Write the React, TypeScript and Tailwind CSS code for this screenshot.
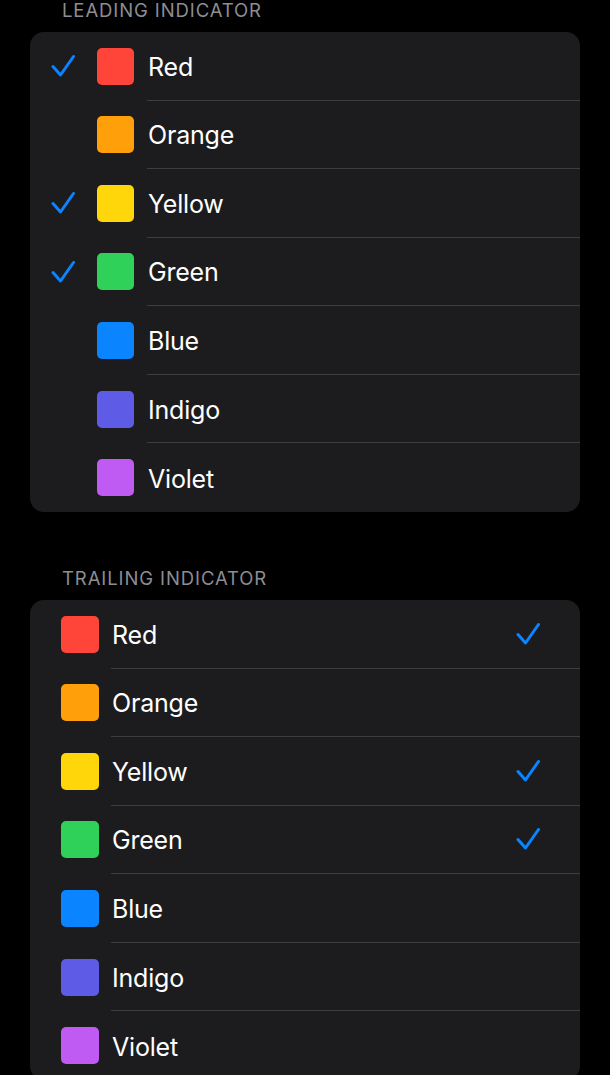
import React from "react";

type Item = { name: string; color: string; checked: boolean };

const items: Item[] = [
  { name: "Red", color: "bg-[#ff453a]", checked: true },
  { name: "Orange", color: "bg-[#ff9f0a]", checked: false },
  { name: "Yellow", color: "bg-[#ffd60a]", checked: true },
  { name: "Green", color: "bg-[#30d158]", checked: true },
  { name: "Blue", color: "bg-[#0a84ff]", checked: false },
  { name: "Indigo", color: "bg-[#5e5ce6]", checked: false },
  { name: "Violet", color: "bg-[#bf5af2]", checked: false },
];

function Check() {
  return (
    <svg width="24" height="24" viewBox="0 0 24 24" fill="none">
      <path
        d="M2 12.5 L9.5 21 L22.5 2.5"
        stroke="#0a84ff"
        strokeWidth="3"
        strokeLinecap="round"
        strokeLinejoin="round"
      />
    </svg>
  );
}

function Header({ title }: { title: string }) {
  return (
    <h2 className="pl-[32px] text-[18.5px] leading-[21px] tracking-[0.9px] text-[#8d8d93] mb-[11px]">
      {title}
    </h2>
  );
}

export default function App() {
  return (
    <div className="min-h-screen bg-black px-[30px] font-['Inter',sans-serif] text-white">
      <Header title="LEADING INDICATOR" />
      <div className="rounded-[14px] bg-[#1c1c1e] overflow-hidden">
        {items.map((item, i) => (
          <div key={item.name} className="flex h-[68.57px]">
            <div className="flex items-center w-[117px] shrink-0">
              <div className="w-[21px]" />
              <div className="w-[24px] h-[24px]">{item.checked && <Check />}</div>
              <div className="w-[22px]" />
              <div className={`w-[37px] h-[37px] rounded-[5px] ${item.color}`} />
            </div>
            <div
              className={`flex-1 flex items-center pl-[1px] pt-[2px] text-[25px] leading-[32px] tracking-[-0.2px] ${
                i < items.length - 1 ? "border-b border-[#3d3d41]" : ""
              }`}
            >
              {item.name}
            </div>
          </div>
        ))}
      </div>

      <div className="mt-[56px]">
        <Header title="TRAILING INDICATOR" />
      </div>
      <div className="rounded-[14px] bg-[#1c1c1e] overflow-hidden">
        {items.map((item, i) => (
          <div key={item.name} className="flex h-[68.57px]">
            <div className="flex items-center w-[81px] shrink-0 pl-[31px]">
              <div className={`w-[38px] h-[37px] rounded-[5px] ${item.color}`} />
            </div>
            <div
              className={`flex-1 flex items-center justify-between pl-[1px] pr-[40px] text-[25px] leading-[32px] tracking-[-0.2px] ${
                i < items.length - 1 ? "border-b border-[#3d3d41]" : ""
              }`}
            >
              <span className="pt-[2px]">{item.name}</span>
              <div className="w-[24px] h-[24px]">{item.checked && <Check />}</div>
            </div>
          </div>
        ))}
      </div>
    </div>
  );
}
